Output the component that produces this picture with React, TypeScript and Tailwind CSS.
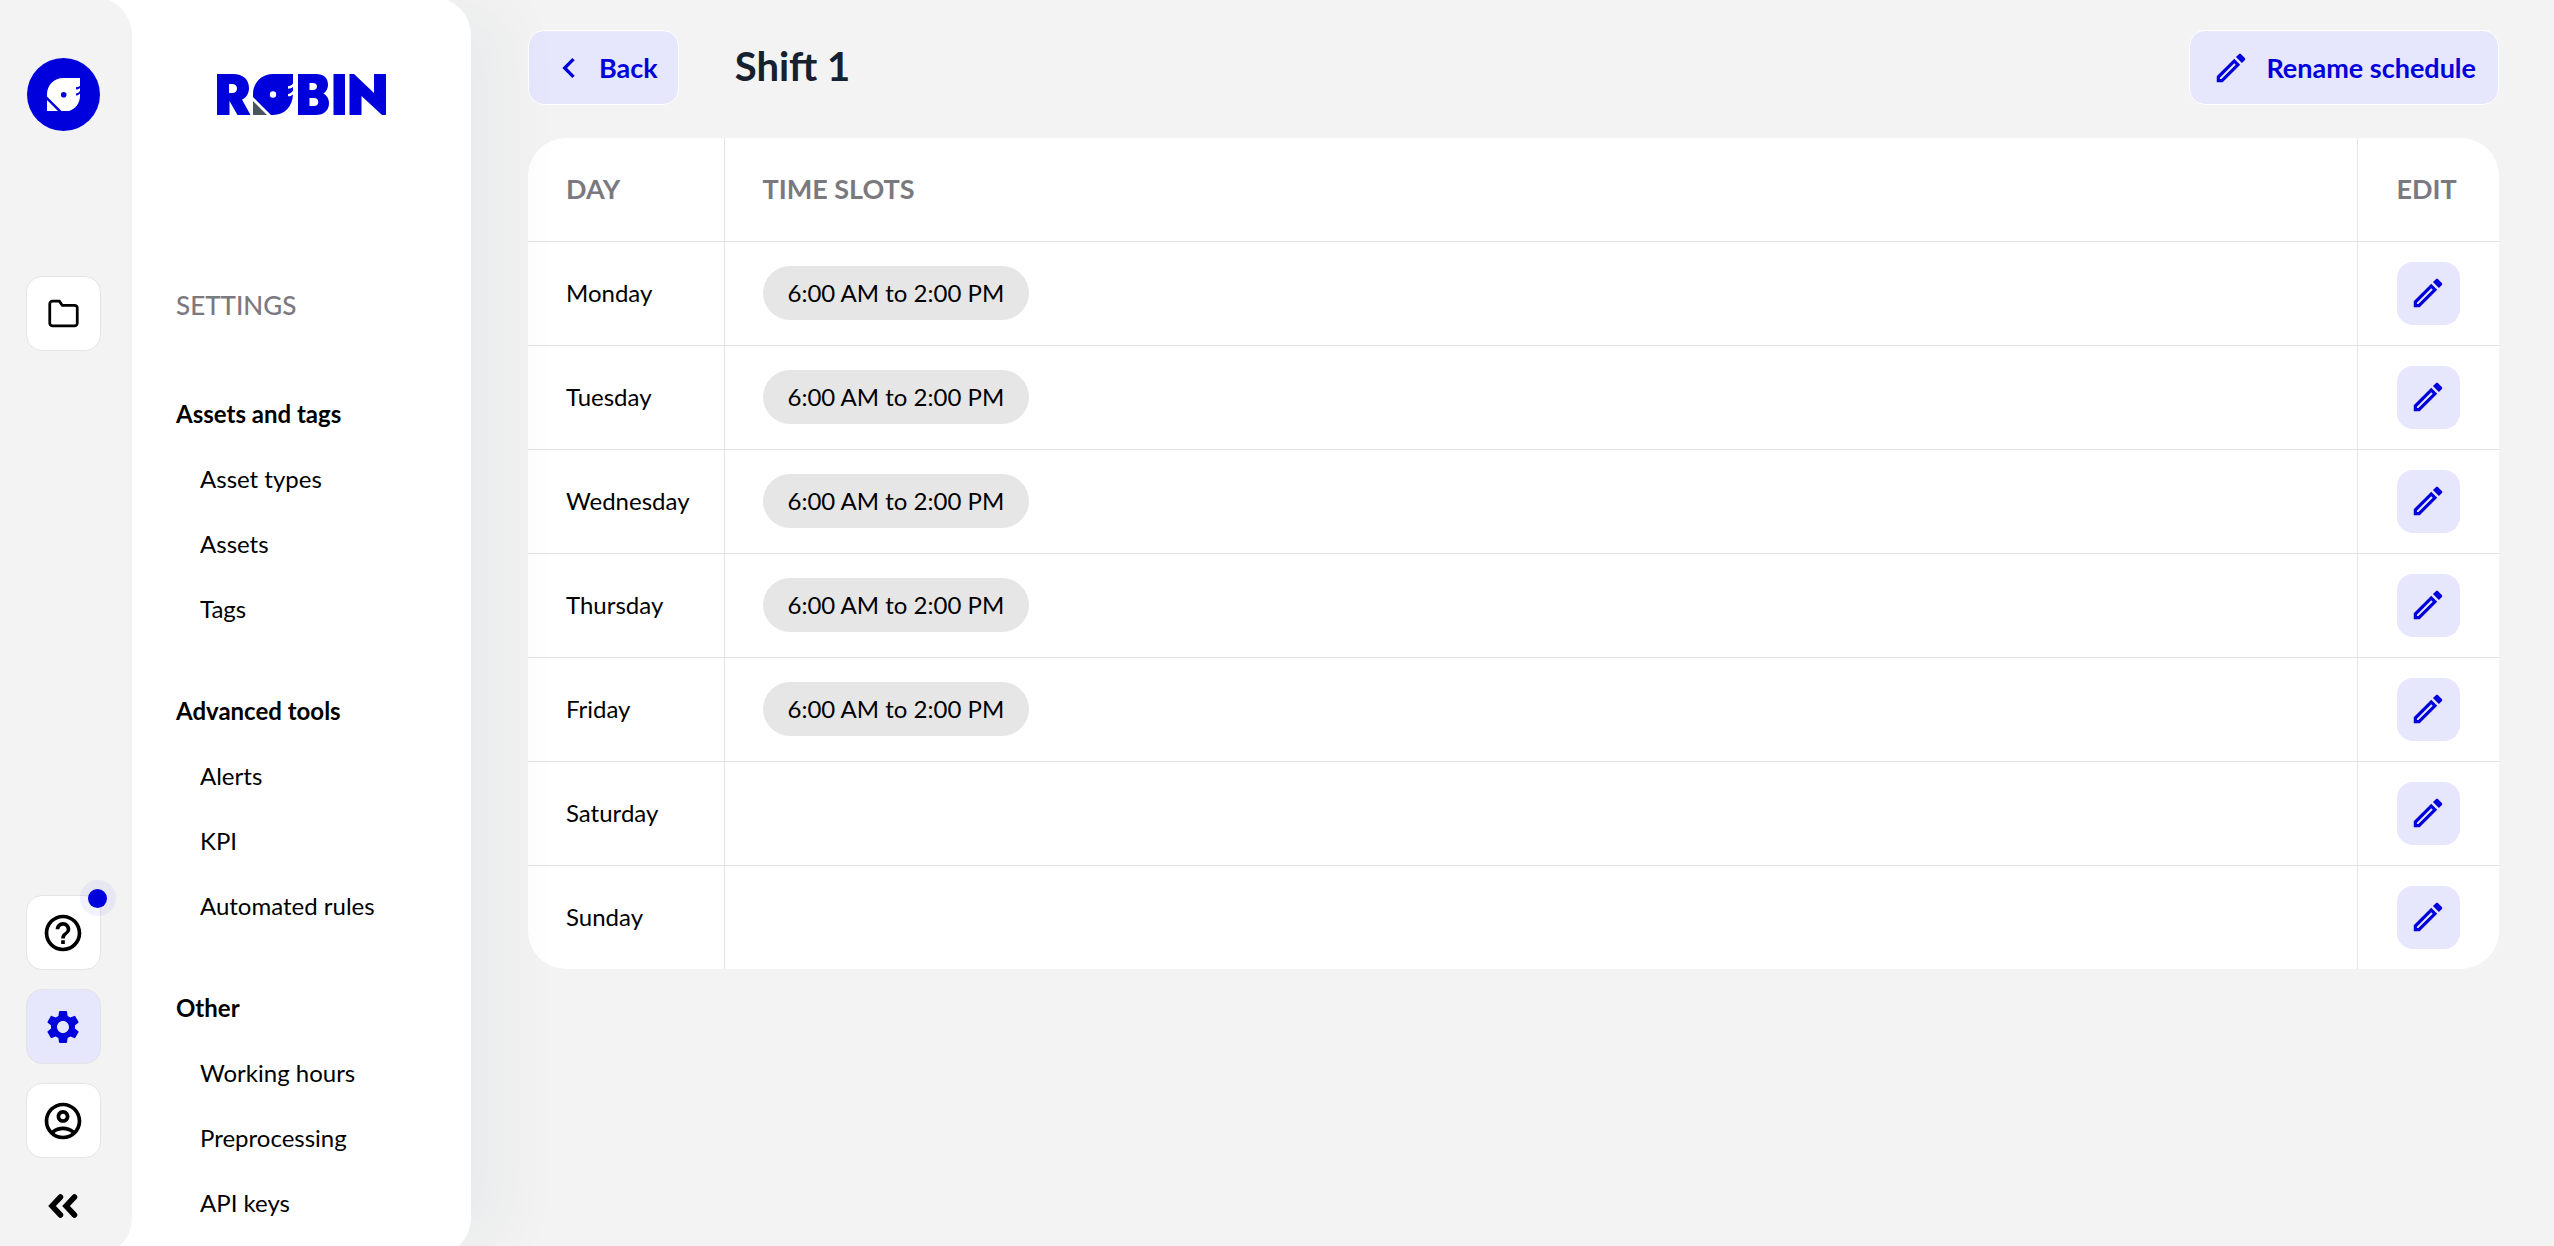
import { MdOutlineEdit, MdChevronLeft, MdOutlineAccountCircle, MdHelpOutline, MdSettings } from "react-icons/md";
import { FiFolder } from "react-icons/fi";
import type { ReactNode } from "react";

const groups = [
  { title: "Assets and tags", items: ["Asset types", "Assets", "Tags"] },
  { title: "Advanced tools", items: ["Alerts", "KPI", "Automated rules"] },
  { title: "Other", items: ["Working hours", "Preprocessing", "API keys"] },
];

const days = [
  { name: "Monday", slot: "6:00 AM to 2:00 PM" },
  { name: "Tuesday", slot: "6:00 AM to 2:00 PM" },
  { name: "Wednesday", slot: "6:00 AM to 2:00 PM" },
  { name: "Thursday", slot: "6:00 AM to 2:00 PM" },
  { name: "Friday", slot: "6:00 AM to 2:00 PM" },
  { name: "Saturday" },
  { name: "Sunday" },
];

function BirdBadge() {
  return (
    <svg viewBox="0 0 73 73" className="size-[73px]" role="img" aria-label="Robin">
      <circle cx="36.5" cy="36.5" r="36.5" fill="#0000dc" />
      <path
        fill="#fff"
        d="M53 20H36.5C27 20 20 27 20 36.500V38.500L34.500 53H42C48.500 51 53 45 53 38V35.500C51.500 37 50.500 37.500 49 37.500V35.500C51.500 35 52.500 34 53 32.500V30C51.500 31 50.500 31.500 49 31.500V29.300C51.500 29.200 52.500 28.500 53 27.500Z"
      />
      <path fill="#fff" d="M20 42V53H31Z" />
      <circle cx="36.700" cy="36.700" r="2.800" fill="#0000dc" />
    </svg>
  );
}

function Wordmark() {
  return (
    <svg viewBox="0 0 169 41" className="h-[41px] w-[169px]" role="img" aria-label="Robin">
      <g fill="#0000dc">
        <path
          fillRule="evenodd"
          d="M0 0H16C26 0 32 5.500 32 14C32 19.500 29.500 23.500 25 25.500L33.500 41H20.500L12.500 27V41H0ZM12 10V19H15C18 19 20 17.500 20 14.500C20 11.500 18 10 15 10Z"
        />
        <path d="M76 0H56C44.500 0 36 9 36 20V23L54 41H56C67.500 41 75.500 32.500 76 20.500C74.500 21.800 73 22.300 71 22.300V20C73.500 19.500 75 18.300 76 16.500V13C74.500 14.300 73 14.700 71 14.700V12.300C73.500 12 75 11 76 9.500Z" />
        <path
          fillRule="evenodd"
          d="M81 0H99C106.500 0 111 4 111 10.500C111 14.500 109.500 17.500 106.500 19.500C110 21.500 112 25 112 29C112 36.500 107 41 98.500 41H81ZM92.500 9V16H96C98.500 16 100 14.800 100 12.500C100 10.200 98.500 9 96 9ZM92.500 24V32H97C99.700 32 101.300 30.500 101.300 28C101.300 25.500 99.700 24 97 24Z"
        />
        <path d="M116.500 0H128V41H116.500Z" />
        <path d="M132.500 0H137L157 19V0H169V41H165L144.500 22V41H132.500Z" />
      </g>
      <path fill="#4b565c" d="M36 27V41H50Z" />
      <circle cx="56" cy="20.500" r="3.200" fill="#fff" />
    </svg>
  );
}

function RailButton({ label, active, children }: { label: string; active?: boolean; children: ReactNode }) {
  return (
    <button
      aria-label={label}
      className={
        "relative flex size-[75px] items-center justify-center rounded-2xl border border-[#e4e4e6] " +
        (active ? "bg-[#e6e6fc] text-[#0000dc]" : "bg-white text-black")
      }
    >
      {children}
    </button>
  );
}

export default function App() {
  return (
    <div className="flex h-screen overflow-hidden bg-[#f3f3f3] font-['Lato',sans-serif] text-2xl text-black">
      <div className="relative z-10 -mt-[3px] -mb-2.5 flex w-[471px] shrink-0 rounded-r-[38px] bg-white shadow-[50px_0_60px_-10px_rgba(20,40,80,0.04)]">
        <nav aria-label="Main" className="flex w-[132px] shrink-0 flex-col items-center rounded-r-[38px] bg-[#f3f3f3] pt-[61px] pr-1.5 pb-[21px]">
          <BirdBadge />
          <div className="mt-[145px]">
            <RailButton label="Files">
              <FiFolder className="size-[33px]" />
            </RailButton>
          </div>
          <div className="mt-auto flex flex-col items-center gap-[19px]">
            <RailButton label="Help">
              <MdHelpOutline className="size-11" />
              <span className="absolute -top-4 -right-4 flex size-9 items-center justify-center rounded-full bg-[#0000dc]/5">
                <span className="size-[19px] rounded-full bg-[#0000dc]" />
              </span>
            </RailButton>
            <RailButton label="Settings" active>
              <MdSettings className="size-10" />
            </RailButton>
            <RailButton label="Account">
              <MdOutlineAccountCircle className="size-11" />
            </RailButton>
            <button aria-label="Collapse" className="flex h-[58px] w-[75px] items-center justify-center">
              <svg viewBox="0 0 32 26" className="h-[26px] w-8" fill="none" stroke="currentColor" strokeWidth="5.500">
                <path d="M13.500 4 5 13 13.500 22M27.500 4 19 13 27.500 22" strokeLinecap="round" />
              </svg>
            </button>
          </div>
        </nav>
        <div className="flex grow flex-col pt-[77px] pl-11">
          <div className="pl-[41px]">
            <Wordmark />
          </div>
          <h2 className="mt-[170px] text-[26px] leading-10 font-medium text-[#7a797f]">SETTINGS</h2>
          <nav aria-label="Settings" className="mt-14 flex flex-col gap-[37px]">
            {groups.map((g) => (
              <section key={g.title}>
                <h3 className="text-2xl leading-[65px] font-bold">{g.title}</h3>
                <ul className="pl-6">
                  {g.items.map((i) => (
                    <li key={i}>
                      <a href="#" className="block text-2xl leading-[65px]">
                        {i}
                      </a>
                    </li>
                  ))}
                </ul>
              </section>
            ))}
          </nav>
        </div>
      </div>
      <main className="min-w-0 grow pt-[30px] pr-[55px] pl-[57px]">
        <header className="flex items-center">
          <button className="flex h-[75px] items-center gap-2.5 rounded-2xl border border-white bg-[#e6e6fc] px-5 text-[27px] font-bold text-[#0000dc]">
            <MdChevronLeft className="size-10" />
            Back
          </button>
          <h1 className="ml-14 pb-1 text-[40px] leading-none font-bold text-[#17202e]">Shift 1</h1>
          <button className="ml-auto flex h-[75px] items-center gap-4 rounded-2xl border border-white bg-[#e6e6fc] px-[22px] text-[27px] font-bold text-[#0000dc]">
            <MdOutlineEdit className="size-[38px]" />
            Rename schedule
          </button>
        </header>
        <div className="mt-[33px] overflow-hidden rounded-[38px] bg-white">
          <table className="w-full border-collapse text-left">
            <thead>
              <tr className="h-[103px] text-[27px] font-bold text-[#7a797f]">
                <th className="w-[196px] border-r border-[#e2e3e3] pl-[38px]">DAY</th>
                <th className="border-r border-[#e2e3e3] pl-[38px]">TIME SLOTS</th>
                <th className="w-[142px] pl-[39px]">EDIT</th>
              </tr>
            </thead>
            <tbody>
              {days.map((d) => (
                <tr key={d.name} className="h-[104px] border-t border-[#e2e3e3]">
                  <td className="border-r border-[#e2e3e3] pl-[38px]">{d.name}</td>
                  <td className="border-r border-[#e2e3e3] pl-[38px]">
                    {d.slot && (
                      <span className="inline-flex h-[54px] items-center rounded-full bg-[#e6e6e6] px-[25px]">{d.slot}</span>
                    )}
                  </td>
                  <td className="pl-[39px]">
                    <button aria-label={"Edit " + d.name} className="flex size-[63px] items-center justify-center rounded-2xl bg-[#e6e6fc] text-[#0000dc]">
                      <MdOutlineEdit className="size-[38px]" />
                    </button>
                  </td>
                </tr>
              ))}
            </tbody>
          </table>
        </div>
      </main>
    </div>
  );
}
